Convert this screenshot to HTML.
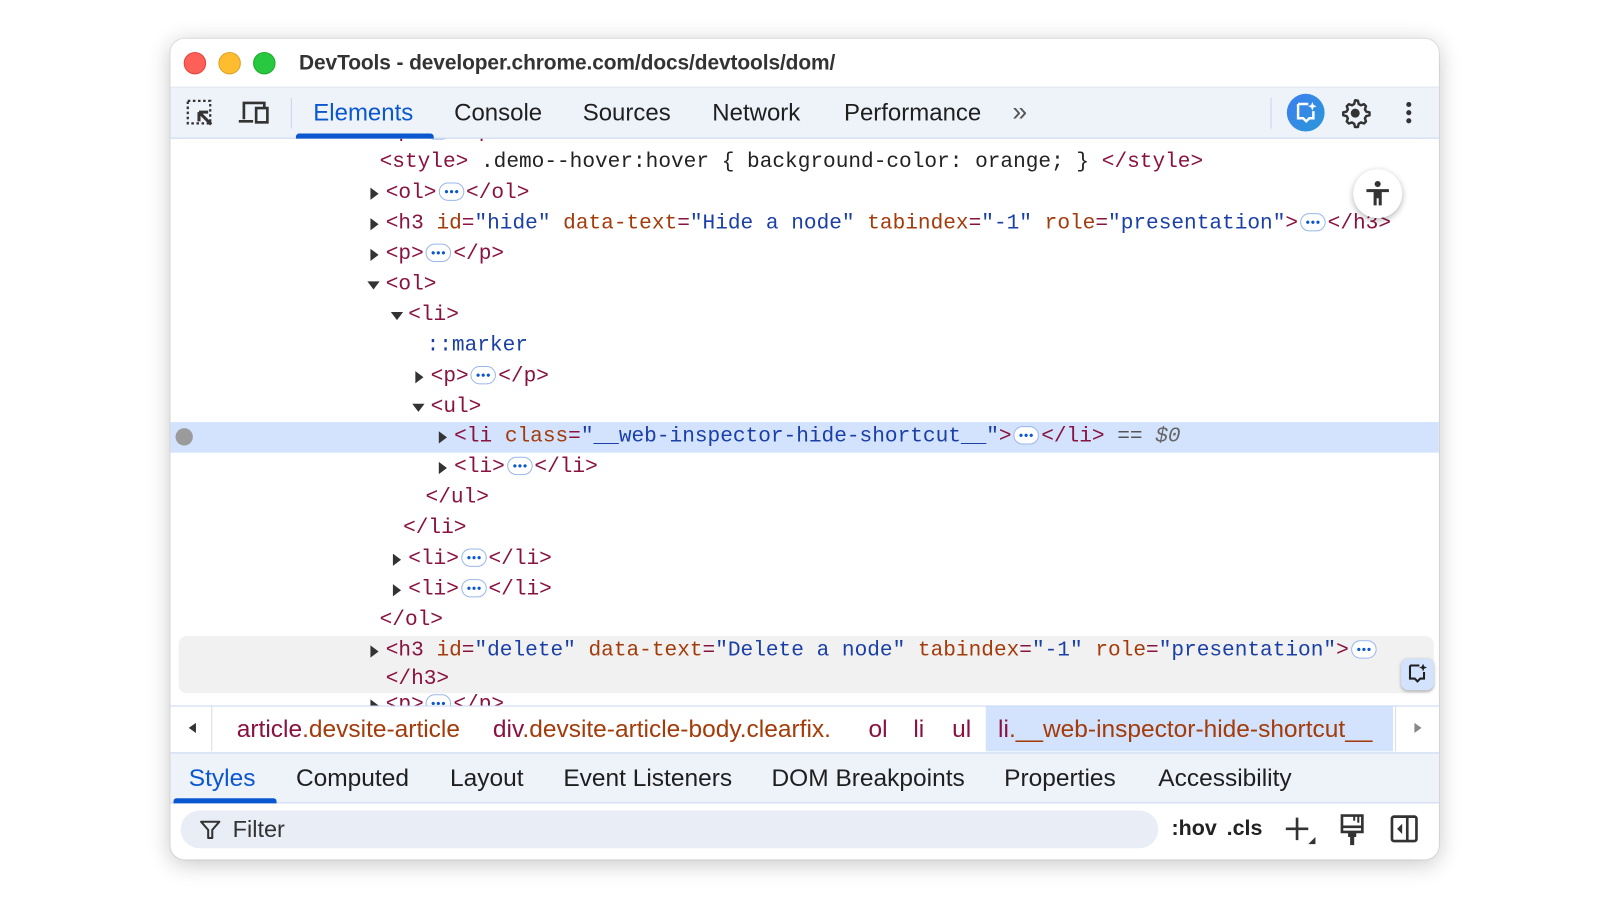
<!DOCTYPE html>
<html><head><meta charset="utf-8"><style>
*{margin:0;padding:0;box-sizing:border-box}
html,body{width:1600px;height:920px;overflow:hidden;background:#fff}
#s{position:absolute;left:0;top:0;width:1560px;height:897px;transform:scale(1.0205,1.0195);transform-origin:0 0;font-family:"Liberation Sans",sans-serif}
.win{position:absolute;left:167px;top:38px;width:1243px;height:805px;border-radius:14px;background:#fff;box-shadow:0 4px 22px rgba(0,0,0,.22),0 0 0 1px rgba(0,0,0,.08);overflow:hidden}
.a{position:absolute}
.dot{position:absolute;top:13px;width:22px;height:22px;border-radius:50%}
.tb{position:absolute;left:0;top:47px;width:1243px;height:51px;background:#eef2f9;border-top:1px solid #e2e6ee;border-bottom:1px solid #c9d7f0;z-index:2}
.tab{position:absolute;top:11px;font-size:23.5px;color:#1f1f1f}
.code{font-family:"Liberation Mono",monospace;font-size:20.7px;white-space:pre;position:absolute;line-height:30px;height:30px}
.t{color:#881240}.n{color:#a33b0a}.v{color:#1a3fa6}.k{color:#222}
.el{display:inline-block;width:25px;height:18px;border:1.5px solid #9ab7ea;border-radius:9px;vertical-align:-3px;margin:0 2px;background:radial-gradient(circle,#0b57d0 1.4px,transparent 1.8px) 4px 50%/5px 6px no-repeat,radial-gradient(circle,#0b57d0 1.4px,transparent 1.8px) 9px 50%/5px 6px no-repeat,radial-gradient(circle,#0b57d0 1.4px,transparent 1.8px) 14px 50%/5px 6px no-repeat,#fff}
.tr{position:absolute;width:0;height:0;border-top:6px solid transparent;border-bottom:6px solid transparent;border-left:8px solid #333}
.td{position:absolute;width:0;height:0;border-left:6px solid transparent;border-right:6px solid transparent;border-top:8px solid #333}
.bc{position:absolute;top:10px;font-size:24px}
.st{position:absolute;top:11px;font-size:24px;color:#1f1f1f}
#c{position:absolute;left:0;top:2px;width:1243px;height:800px}
</style></head><body><div id="s">
<div class="win">
 <div class="dot" style="left:13px;background:#fe5f57;border:1px solid #e0443e"></div>
 <div class="dot" style="left:47px;background:#febc2e;border:1px solid #dea123"></div>
 <div class="dot" style="left:81px;background:#28c840;border:1px solid #1aab29"></div>
 <div class="a" style="left:126px;top:12px;font-size:20.5px;color:#333;font-weight:bold;letter-spacing:-.1px">DevTools - developer.chrome.com/docs/devtools/dom/</div>
 <div class="tb">
  <svg class="a" style="left:15px;top:11px" width="30" height="28" viewBox="0 0 30 28"><rect x="2" y="2" width="22" height="22" fill="none" stroke="#333" stroke-width="2.2" stroke-dasharray="2.5 2.5"/><path d="M13 13h9M13 13v9M13 13l12 12" stroke="#333" stroke-width="3" fill="#eef2f9"/></svg>
  <svg class="a" style="left:66px;top:11px" width="34" height="28" viewBox="0 0 34 28"><path d="M6 20V4h20v4" fill="none" stroke="#333" stroke-width="2.6"/><path d="M1 22h14" stroke="#333" stroke-width="2.6"/><rect x="18" y="9" width="11" height="14" fill="none" stroke="#333" stroke-width="2.6"/></svg>
  <div class="a" style="left:118px;top:10px;width:1px;height:30px;background:#c8d4ea"></div>
  <div class="tab" style="left:140px;color:#0b57d0">Elements</div>
  <div class="a" style="left:123px;top:45px;width:135px;height:5px;background:#0b57d0;border-radius:3px 3px 0 0"></div>
  <div class="tab" style="left:278px">Console</div>
  <div class="tab" style="left:404px">Sources</div>
  <div class="tab" style="left:531px">Network</div>
  <div class="tab" style="left:660px">Performance</div>
  <div class="tab" style="left:825px;color:#555;font-size:26px;top:8px">&#187;</div>
  <div class="a" style="left:1078px;top:10px;width:1px;height:30px;background:#c8d4ea"></div>
  <div class="a" style="left:1094px;top:6px;width:37px;height:37px;border-radius:50%;background:linear-gradient(135deg,#3d7ef0,#2a98d8)"></div>
  <svg class="a" style="left:1101px;top:13px" width="24" height="24" viewBox="0 0 24 24"><path d="M4 3h10M4 3v14h5l3 3 3-3h4v-7" fill="none" stroke="#fff" stroke-width="2.4"/><path d="M18 1l1.2 3 3 1.2-3 1.2L18 9.5l-1.2-3.1-3-1.2 3-1.2z" fill="#fff"/></svg>
  <svg class="a" style="left:1145px;top:9px" width="32" height="32" viewBox="0 0 24 24"><path d="M12 2.5l2 .3.5 2.4 1.7 1 2.3-.8 1.4 1.5-.8 2.3 1 1.7 2.4.5v2.2l-2.4.5-1 1.7.8 2.3-1.4 1.5-2.3-.8-1.7 1-.5 2.4h-2.2l-.5-2.4-1.7-1-2.3.8-1.5-1.5.8-2.3-1-1.7-2.4-.5v-2.2l2.4-.5 1-1.7-.8-2.3 1.5-1.5 2.3.8 1.7-1 .5-2.4z" fill="none" stroke="#333" stroke-width="1.8" stroke-linejoin="round"/><circle cx="12" cy="12" r="3.3" fill="#333"/></svg>
  <div class="a" style="left:1211px;top:14px;width:5px;height:5px;border-radius:50%;background:#333;box-shadow:0 8px 0 #333,0 16px 0 #333"></div>
 </div>
 <div id="c">
 <div class="a" style="left:0;top:374px;width:1243px;height:30px;background:#d3e2fd"></div>
 <div class="a" style="left:5px;top:380px;width:17px;height:17px;border-radius:50%;background:#9b9b9b"></div>
 <div class="a" style="left:8px;top:584px;width:1230px;height:56px;background:#f1f1f1;border-radius:8px"></div>
 <div class="code" style="left:211px;top:75px"><span class="t">&lt;p&gt;</span><span class="el"></span><span class="t">&lt;/p&gt;</span></div>
 <div class="code" style="left:205px;top:105px"><span class="t">&lt;style&gt;</span><span class="k"> .demo--hover:hover { background-color: orange; } </span><span class="t">&lt;/style&gt;</span></div>
 <div class="tr" style="left:196px;top:144px"></div>
 <div class="code" style="left:211px;top:135px"><span class="t">&lt;ol&gt;</span><span class="el"></span><span class="t">&lt;/ol&gt;</span></div>
 <div class="tr" style="left:196px;top:174px"></div>
 <div class="code" style="left:211px;top:165px"><span class="t">&lt;h3 </span><span class="n">id</span><span class="t">=</span><span class="v">"hide"</span> <span class="n">data-text</span><span class="t">=</span><span class="v">"Hide a node"</span> <span class="n">tabindex</span><span class="t">=</span><span class="v">"-1"</span> <span class="n">role</span><span class="t">=</span><span class="v">"presentation"</span><span class="t">&gt;</span><span class="el"></span><span class="t">&lt;/h3&gt;</span></div>
 <div class="tr" style="left:196px;top:204px"></div>
 <div class="code" style="left:211px;top:195px"><span class="t">&lt;p&gt;</span><span class="el"></span><span class="t">&lt;/p&gt;</span></div>
 <div class="td" style="left:193px;top:236px"></div>
 <div class="code" style="left:211px;top:225px"><span class="t">&lt;ol&gt;</span></div>
 <div class="td" style="left:216px;top:266px"></div>
 <div class="code" style="left:233px;top:255px"><span class="t">&lt;li&gt;</span></div>
 <div class="code" style="left:251px;top:285px"><span class="v">::marker</span></div>
 <div class="tr" style="left:240px;top:324px"></div>
 <div class="code" style="left:255px;top:315px"><span class="t">&lt;p&gt;</span><span class="el"></span><span class="t">&lt;/p&gt;</span></div>
 <div class="td" style="left:237px;top:356px"></div>
 <div class="code" style="left:255px;top:345px"><span class="t">&lt;ul&gt;</span></div>
 <div class="tr" style="left:263px;top:383px"></div>
 <div class="code" style="left:278px;top:374px"><span class="t">&lt;li </span><span class="n">class</span><span class="t">=</span><span class="v">"__web-inspector-hide-shortcut__"</span><span class="t">&gt;</span><span class="el"></span><span class="t">&lt;/li&gt;</span><span style="color:#555"> == </span><span style="color:#666;font-style:italic">$0</span></div>
 <div class="tr" style="left:263px;top:413px"></div>
 <div class="code" style="left:278px;top:404px"><span class="t">&lt;li&gt;</span><span class="el"></span><span class="t">&lt;/li&gt;</span></div>
 <div class="code" style="left:250px;top:434px"><span class="t">&lt;/ul&gt;</span></div>
 <div class="code" style="left:228px;top:464px"><span class="t">&lt;/li&gt;</span></div>
 <div class="tr" style="left:218px;top:503px"></div>
 <div class="code" style="left:233px;top:494px"><span class="t">&lt;li&gt;</span><span class="el"></span><span class="t">&lt;/li&gt;</span></div>
 <div class="tr" style="left:218px;top:533px"></div>
 <div class="code" style="left:233px;top:524px"><span class="t">&lt;li&gt;</span><span class="el"></span><span class="t">&lt;/li&gt;</span></div>
 <div class="code" style="left:205px;top:554px"><span class="t">&lt;/ol&gt;</span></div>
 <div class="tr" style="left:196px;top:593px"></div>
 <div class="code" style="left:211px;top:584px"><span class="t">&lt;h3 </span><span class="n">id</span><span class="t">=</span><span class="v">"delete"</span> <span class="n">data-text</span><span class="t">=</span><span class="v">"Delete a node"</span> <span class="n">tabindex</span><span class="t">=</span><span class="v">"-1"</span> <span class="n">role</span><span class="t">=</span><span class="v">"presentation"</span><span class="t">&gt;</span><span class="el"></span></div>
 <div class="code" style="left:211px;top:612px"><span class="t">&lt;/h3&gt;</span></div>
 <div class="tr" style="left:196px;top:646px"></div>
 <div class="code" style="left:211px;top:637px"><span class="t">&lt;p&gt;</span><span class="el"></span><span class="t">&lt;/p&gt;</span></div>
 <div class="a" style="left:1159px;top:126px;width:48px;height:48px;border-radius:50%;background:#fff;box-shadow:0 2px 6px rgba(0,0,0,.3)"></div>
 <svg class="a" style="left:1169px;top:136px" width="28" height="28" viewBox="0 0 28 28"><circle cx="14" cy="4.5" r="3" fill="#333"/><path d="M3 9.5h22v3h-7v13h-3v-7h-2v7h-3v-13H3z" fill="#333"/></svg>
 <div class="a" style="left:1206px;top:606px;width:32px;height:31px;border-radius:7px;background:#d3e2fd;box-shadow:0 1px 3px rgba(0,0,0,.3)"></div>
 <svg class="a" style="left:1211px;top:610px" width="22" height="22" viewBox="0 0 24 24"><path d="M4 3h10M4 3v14h5l3 3 3-3h4v-7" fill="none" stroke="#1f1f1f" stroke-width="2.2"/><path d="M18 1l1.2 3 3 1.2-3 1.2L18 9.5l-1.2-3.1-3-1.2 3-1.2z" fill="#1f1f1f"/></svg>
 </div>
 <div class="a" style="left:0;top:654px;width:1243px;height:46px;background:#fff;border-top:1px solid #c9d7f0"></div>
 <div class="a" style="left:3px;top:655px;width:38px;height:44px;border-right:1px solid #ddd;background:#fff"></div>
 <div class="a" style="left:18px;top:671px;border-top:5px solid transparent;border-bottom:5px solid transparent;border-right:7px solid #333"></div>
 <div class="a" style="left:799px;top:655px;width:399px;height:44px;background:#d3e2fd"></div>
 <div class="a" style="left:1200px;top:655px;width:43px;height:44px;background:#fff;border-left:1px solid #ddd"></div>
 <div class="a" style="left:1219px;top:671px;border-top:5px solid transparent;border-bottom:5px solid transparent;border-left:7px solid #888"></div>
 <div class="a" style="left:0;top:654px;width:1243px;height:46px">
  <div class="bc" style="left:65px"><span class="t">article</span><span class="n">.devsite-article</span></div>
  <div class="bc" style="left:316px"><span class="t">div</span><span class="n">.devsite-article-body.clearfix.</span></div>
  <div class="bc" style="left:684px"><span class="t">ol</span></div>
  <div class="bc" style="left:728px"><span class="t">li</span></div>
  <div class="bc" style="left:766px"><span class="t">ul</span></div>
  <div class="bc" style="left:811px"><span class="t">li</span><span class="n">.__web-inspector-hide-shortcut__</span></div>
 </div>
 <div class="a" style="left:0;top:700px;width:1243px;height:50px;background:#eef2f9;border-top:1px solid #c9d7f0;border-bottom:1px solid #c9d7f0">
  <div class="st" style="left:18px;color:#0b57d0">Styles</div>
  <div class="a" style="left:3px;top:44px;width:101px;height:5px;background:#0b57d0;border-radius:3px 3px 0 0"></div>
  <div class="st" style="left:123px">Computed</div>
  <div class="st" style="left:274px">Layout</div>
  <div class="st" style="left:385px">Event Listeners</div>
  <div class="st" style="left:589px">DOM Breakpoints</div>
  <div class="st" style="left:817px">Properties</div>
  <div class="st" style="left:968px">Accessibility</div>
 </div>
 <div class="a" style="left:10px;top:757px;width:958px;height:37px;border-radius:19px;background:#e9eef6"></div>
 <svg class="a" style="left:28px;top:765px" width="22" height="22" viewBox="0 0 22 22"><path d="M2 3h18l-7 8v8h-4v-8z" fill="none" stroke="#333" stroke-width="2" stroke-linejoin="round"/></svg>
 <div class="a" style="left:61px;top:762px;font-size:23px;color:#333">Filter</div>
 <div class="a" style="left:981px;top:763px;font-size:21px;color:#222;font-weight:bold">:hov</div>
 <div class="a" style="left:1035px;top:763px;font-size:21px;color:#222;font-weight:bold">.cls</div>
 <svg class="a" style="left:1092px;top:762px" width="34" height="30" viewBox="0 0 34 30"><path d="M12 2v22M1 13h22" stroke="#333" stroke-width="2.6"/><path d="M30 21v7h-7z" fill="#333"/></svg>
 <svg class="a" style="left:1145px;top:760px" width="26" height="32" viewBox="0 0 26 32"><path d="M3 2h20v16H3z M3 13h20" fill="none" stroke="#333" stroke-width="2.6"/><path d="M15 2v5M19 2v7" stroke="#333" stroke-width="2"/><path d="M9 18h8v5h-2v8h-4v-8H9z" fill="#333"/></svg>
 <svg class="a" style="left:1195px;top:761px" width="28" height="28" viewBox="0 0 28 28"><rect x="2" y="2" width="24" height="24" rx="2" fill="none" stroke="#333" stroke-width="2.6"/><path d="M17 2v24" stroke="#333" stroke-width="2.6"/><path d="M12 9v10l-5-5z" fill="#333"/></svg>
</div>
</div></body></html>
